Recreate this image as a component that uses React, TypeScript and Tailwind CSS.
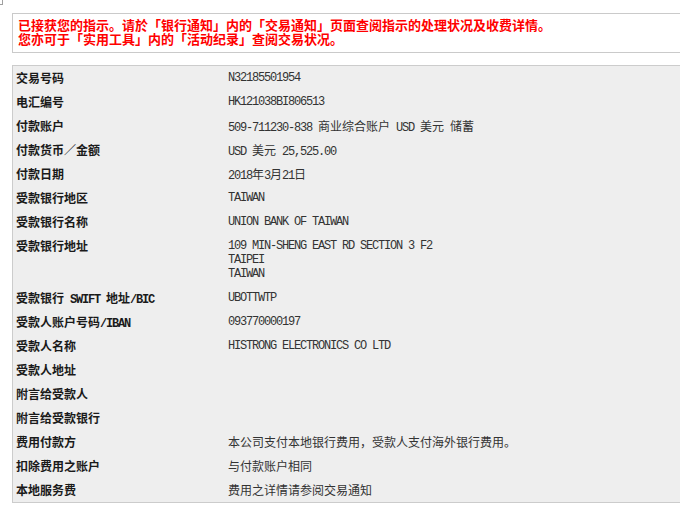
import React from 'react'

type Row = { label: string; value: string[] }

const rows: Row[] = [
  { label: '交易号码', value: ['N32185501954'] },
  { label: '电汇编号', value: ['HK121038BI806513'] },
  { label: '付款账户', value: ['509-711230-838 商业综合账户 USD 美元 储蓄'] },
  { label: '付款货币／金额', value: ['USD 美元 25,525.00'] },
  { label: '付款日期', value: ['2018年3月21日'] },
  { label: '受款银行地区', value: ['TAIWAN'] },
  { label: '受款银行名称', value: ['UNION BANK OF TAIWAN'] },
  { label: '受款银行地址', value: ['109 MIN-SHENG EAST RD SECTION 3 F2', 'TAIPEI', 'TAIWAN'] },
  { label: '受款银行 SWIFT 地址/BIC', value: ['UBOTTWTP'] },
  { label: '受款人账户号码/IBAN', value: ['093770000197'] },
  { label: '受款人名称', value: ['HISTRONG ELECTRONICS CO LTD'] },
  { label: '受款人地址', value: [''] },
  { label: '附言给受款人', value: [''] },
  { label: '附言给受款银行', value: [''] },
  { label: '费用付款方', value: ['本公司支付本地银行费用，受款人支付海外银行费用。'] },
  { label: '扣除费用之账户', value: ['与付款账户相同'] },
  { label: '本地服务费', value: ['费用之详情请参阅交易通知'] },
]

// one 14px line; half-width latin runs get a narrow mono face, the rest stays CJK
const Line: React.FC<{ text: string }> = ({ text }) => {
  const parts = text.split(/([\x00-\x7F]+)/).filter((p) => p !== '')
  return (
    <div className="flex items-baseline h-[14px] leading-[14px] whitespace-pre">
      {parts.map((p, i) =>
        /^[\x00-\x7F]+$/.test(p) ? (
          <span key={i} className="font-['Liberation_Mono',monospace] text-[12px] leading-[14px] tracking-[-1.2px]">
            {p}
          </span>
        ) : (
          <span key={i} className="leading-[14px]">{p}</span>
        ),
      )}
    </div>
  )
}

export default function App() {
  return (
    <div className="w-[680px] h-[512px] overflow-hidden bg-white font-['Noto_Sans_CJK_SC',sans-serif]">
      {/* little corner mark */}
      <div className="h-[5px] w-[3px] border-r border-b border-[#a0a0a0]"></div>

      <div className="pl-[12px] mt-[8px]">
        {/* notice */}
        <div className="w-[720px] h-[40px] border border-[#cacaca] bg-white pl-[5px] pt-[4px]">
          <div className="h-[14px] text-[13px] leading-[14px] font-bold text-[#ff0000] whitespace-nowrap">
            已接获您的指示。请於「银行通知」内的「交易通知」页面查阅指示的处理状况及收费详情。
          </div>
          <div className="h-[14px] text-[13px] leading-[14px] font-bold text-[#ff0000] whitespace-nowrap">
            您亦可于「实用工具」内的「活动纪录」查阅交易状况。
          </div>
        </div>

        {/* details */}
        <div className="mt-[12px] w-[720px] border border-[#cccccc] bg-[#eeeeee]">
          {rows.map((r, idx) => (
            <div key={idx} className="flex py-[5px] text-[12px]">
              <div className="w-[215px] shrink-0 pl-[3px] font-bold text-[#1a1a1a]">
                <Line text={r.label} />
              </div>
              <div className="flex flex-col text-[#333333]">
                {r.value.map((v, j) => (
                  <Line key={j} text={v} />
                ))}
              </div>
            </div>
          ))}
        </div>
      </div>
    </div>
  )
}
